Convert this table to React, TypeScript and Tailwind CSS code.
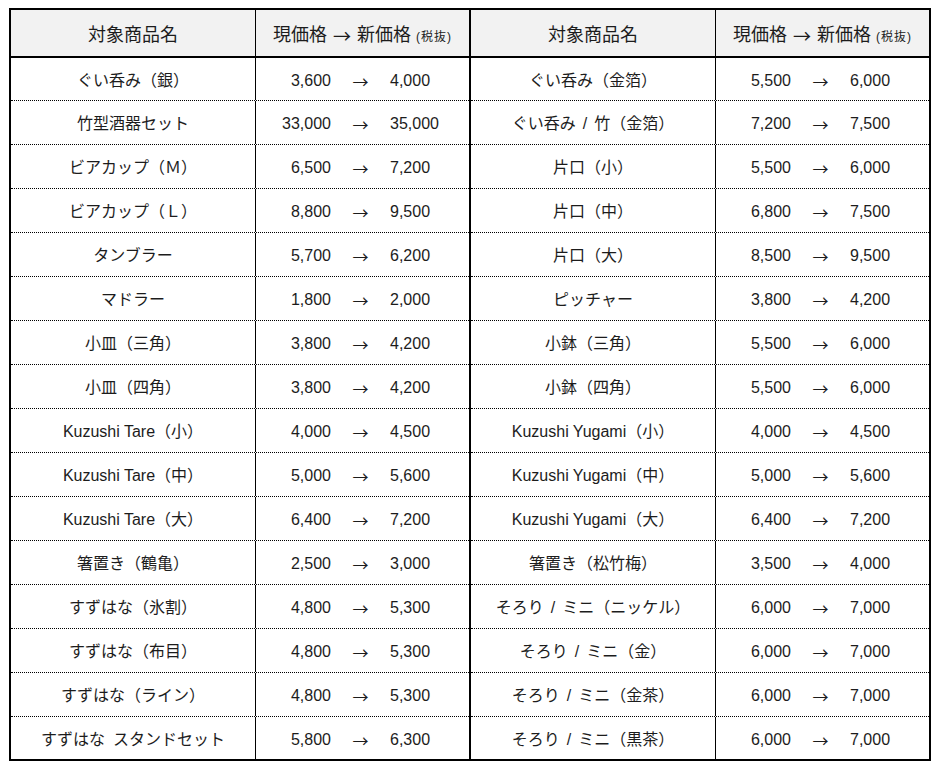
import React from "react";

type Row = [string, string, string];

const left: Row[] = [
  ["ぐい呑み（銀）", "3,600", "4,000"],
  ["竹型酒器セット", "33,000", "35,000"],
  ["ビアカップ（Ｍ）", "6,500", "7,200"],
  ["ビアカップ（Ｌ）", "8,800", "9,500"],
  ["タンブラー", "5,700", "6,200"],
  ["マドラー", "1,800", "2,000"],
  ["小皿（三角）", "3,800", "4,200"],
  ["小皿（四角）", "3,800", "4,200"],
  ["Kuzushi Tare（小）", "4,000", "4,500"],
  ["Kuzushi Tare（中）", "5,000", "5,600"],
  ["Kuzushi Tare（大）", "6,400", "7,200"],
  ["箸置き（鶴亀）", "2,500", "3,000"],
  ["すずはな（氷割）", "4,800", "5,300"],
  ["すずはな（布目）", "4,800", "5,300"],
  ["すずはな（ライン）", "4,800", "5,300"],
  ["すずはな スタンドセット", "5,800", "6,300"],
];

const right: Row[] = [
  ["ぐい呑み（金箔）", "5,500", "6,000"],
  ["ぐい呑み / 竹（金箔）", "7,200", "7,500"],
  ["片口（小）", "5,500", "6,000"],
  ["片口（中）", "6,800", "7,500"],
  ["片口（大）", "8,500", "9,500"],
  ["ピッチャー", "3,800", "4,200"],
  ["小鉢（三角）", "5,500", "6,000"],
  ["小鉢（四角）", "5,500", "6,000"],
  ["Kuzushi Yugami（小）", "4,000", "4,500"],
  ["Kuzushi Yugami（中）", "5,000", "5,600"],
  ["Kuzushi Yugami（大）", "6,400", "7,200"],
  ["箸置き（松竹梅）", "3,500", "4,000"],
  ["そろり / ミニ（ニッケル）", "6,000", "7,000"],
  ["そろり / ミニ（金）", "6,000", "7,000"],
  ["そろり / ミニ（金茶）", "6,000", "7,000"],
  ["そろり / ミニ（黒茶）", "6,000", "7,000"],
];

const CJK = { fontFamily: '"Noto Sans CJK JP", sans-serif' };

function Name({ text }: { text: string }) {
  if (text.startsWith("Kuzushi")) return <span>{text}</span>;
  const parts = text.split(" / ");
  if (parts.length === 1) {
    const sp = text.split(" ");
    if (sp.length === 2)
      return (
        <span>
          {sp[0]}
          <span className="inline-block w-[8px]" />
          {sp[1]}
        </span>
      );
    return <span>{text}</span>;
  }
  return (
    <span>
      {parts[0]}
      <span className="px-[7px]">/</span>
      {parts[1]}
    </span>
  );
}

function Header() {
  return (
    <div className="flex h-[48px] bg-[#f2f2f2] border-b-2 border-black">
      <div className="w-[244px] flex items-center justify-center pt-[5px] text-[18px]">対象商品名</div>
      <div className="w-px bg-black" />
      <div className="w-[213px] flex items-center justify-center pt-[5px] text-[18px] whitespace-nowrap">
        <span>現価格</span>
        <span className="mx-[6px]" style={CJK}>
          →
        </span>
        <span>新価格</span>
        <span className="text-[12px] ml-[5px] pt-[3px] tracking-[1px]">(税抜)</span>
      </div>
    </div>
  );
}

function Body({ rows }: { rows: Row[] }) {
  return (
    <div className="flex flex-col">
      {rows.map((r, i) => {
        const first = i === 0;
        const last = i === rows.length - 1;
        const cls = last
          ? "h-[42px]"
          : first
          ? "h-[43px] border-b border-dotted border-black"
          : "h-[44px] border-b border-dotted border-black";
        return (
          <div key={i} className={`flex ${cls}`}>
            <div className="w-[244px] flex items-center justify-center pt-[3px] text-[16px] whitespace-nowrap">
              <Name text={r[0]} />
            </div>
            <div className="w-px bg-black" />
            <div className="w-[213px] flex items-center pt-[3px] text-[16px] whitespace-nowrap">
              <span className="w-[75px] text-right">{r[1]}</span>
              <span className="w-[59px] text-center" style={CJK}>
                →
              </span>
              <span>{r[2]}</span>
            </div>
          </div>
        );
      })}
    </div>
  );
}

export default function App() {
  return (
    <div
      className="w-[940px] h-[770px] bg-white text-[#1c1c1c] pt-[8px] pl-[9px]"
      style={{ fontFamily: '"Liberation Sans", "Noto Sans CJK JP", sans-serif' }}
    >
      <div className="w-[922px] border-2 border-black flex">
        <div className="flex flex-col w-[458px]">
          <Header />
          <Body rows={left} />
        </div>
        <div className="w-[2px] bg-black" />
        <div className="flex flex-col w-[458px]">
          <Header />
          <Body rows={right} />
        </div>
      </div>
    </div>
  );
}
